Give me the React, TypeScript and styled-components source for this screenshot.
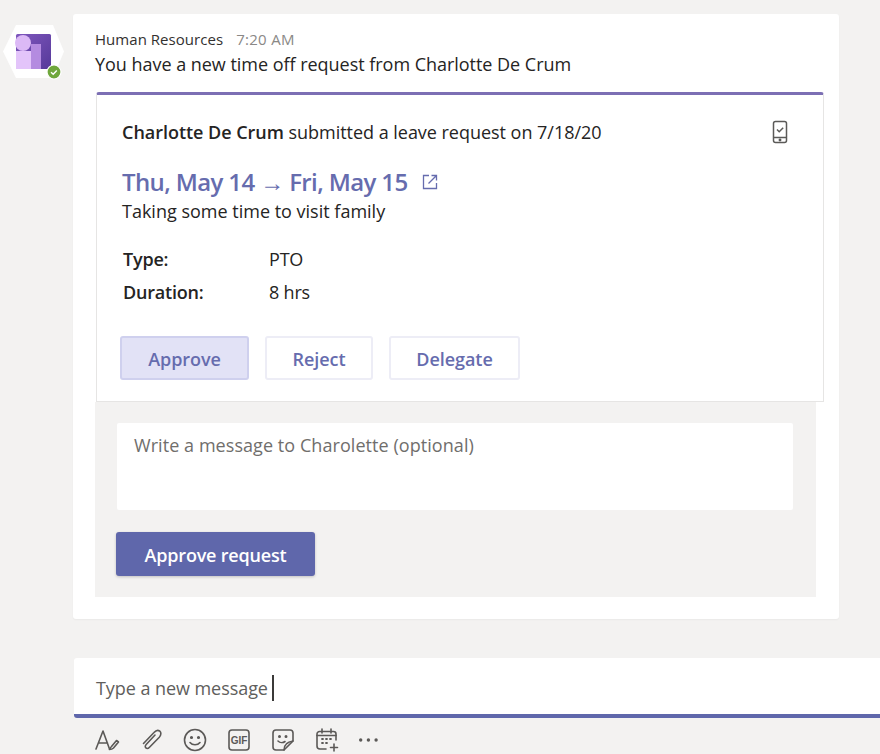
import React from "react";
import styled, { createGlobalStyle } from "styled-components";

const Global = createGlobalStyle`
  html, body { margin: 0; padding: 0; background: #f3f2f1; }
  body { font-family: "Open Sans", "Noto Sans", sans-serif; color: #252423; overflow: hidden; }
`;

const Page = styled.div`
  width: 880px;
  height: 754px;
  overflow: hidden;
  display: flex;
  flex-direction: column;
  padding-top: 14px;
  box-sizing: border-box;
`;

const Thread = styled.div`
  display: flex;
  align-items: flex-start;
`;

const AvatarColumn = styled.div`
  width: 73px;
  flex: none;
  padding: 11px 0 0 3px;
  box-sizing: border-box;
`;

const Message = styled.div`
  width: 766px;
  height: 605px;
  flex: none;
  background: #fff;
  border-radius: 3px;
  box-shadow: 0 1px 2px rgba(0, 0, 0, 0.04);
  padding: 14px 23px 0 22px;
  box-sizing: border-box;
`;

const Meta = styled.div`
  display: flex;
  align-items: baseline;
  gap: 13px;
  height: 23px;
  line-height: 23px;
`;

const Sender = styled.span`
  font-size: 15px;
  letter-spacing: 0.04px;
  color: #33312f;
`;

const Time = styled.span`
  font-size: 15px;
  letter-spacing: 0.3px;
  color: #8a8886;
`;

const Lead = styled.div`
  font-size: 18px;
  line-height: 26px;
  letter-spacing: -0.03px;
  color: #252423;
`;

const Card = styled.div`
  margin: 15px 0 0 1px;
  width: 728px;
  height: 310px;
  box-sizing: border-box;
  background: #fff;
  border: 1px solid #e6e5e4;
  border-top: 3px solid #7c6fb4;
  border-radius: 3px 3px 0 0;
  padding: 24px 25px 0 25px;
`;

const CardTop = styled.div`
  display: flex;
  justify-content: space-between;
  align-items: flex-start;
  padding-right: 10px;
`;

const Submitted = styled.div`
  font-size: 18px;
  line-height: 26px;
  letter-spacing: -0.03px;
  color: #252423;
  strong { font-weight: 600; }
`;

const Dates = styled.div`
  display: flex;
  align-items: center;
  gap: 14px;
  margin-top: 21px;
  font-size: 24px;
  line-height: 32px;
  font-weight: 600;
  letter-spacing: -0.62px;
  color: #666cae;
`;

const Note = styled.div`
  margin-top: 1px;
  font-size: 18px;
  line-height: 24px;
  color: #252423;
`;

const Facts = styled.dl`
  display: grid;
  grid-template-columns: 146px 1fr;
  grid-auto-rows: 32.5px;
  align-items: center;
  margin: 20px 0 0 1px;
  font-size: 18px;
  letter-spacing: -0.2px;
  dt { font-weight: 600; }
  dd { margin: 0; }
`;

const Actions = styled.div`
  display: flex;
  gap: 16px;
  margin-top: 28px;
  margin-left: -2px;
`;

const ActionButton = styled.button<{ $active?: boolean; $width: number }>`
  width: ${(p) => p.$width}px;
  height: 44px;
  padding: 2px 0 0;
  box-sizing: border-box;
  border-radius: 3px;
  border: 2px solid ${(p) => (p.$active ? "#cfd0ee" : "#ededf6")};
  background: ${(p) => (p.$active ? "#e2e2f6" : "#fff")};
  color: #666cae;
  font-family: inherit;
  font-size: 18px;
  font-weight: 600;
  letter-spacing: -0.05px;
`;

const Panel = styled.div`
  margin-left: 0;
  width: 721px;
  height: 195px;
  background: #f3f2f1;
  padding: 21px 0 0 21px;
  box-sizing: border-box;
`;

const Input = styled.div`
  width: 676px;
  height: 87px;
  margin-left: 1px;
  background: #fff;
  border-radius: 2px;
  padding: 9px 17px;
  box-sizing: border-box;
  font-size: 18px;
  line-height: 26px;
  letter-spacing: 0.06px;
  color: #706e6c;
`;

const Submit = styled.button`
  display: block;
  margin-top: 22px;
  width: 199px;
  height: 44px;
  padding: 2px 0 0;
  border: none;
  border-radius: 3px;
  background: #5f67ab;
  box-shadow: 0 1px 3px rgba(0, 0, 0, 0.2);
  color: #fff;
  font-family: inherit;
  font-size: 18px;
  font-weight: 600;
  letter-spacing: -0.2px;
`;

const Composer = styled.div`
  margin: 39px 0 0 74px;
  height: 60px;
  box-sizing: border-box;
  background: #fff;
  border-bottom: 4px solid #5f67ab;
  border-radius: 3px 0 0 3px;
  padding: 17px 0 0 22px;
  display: flex;
  align-items: flex-start;
  font-size: 18px;
  line-height: 26px;
  letter-spacing: -0.06px;
  color: #605e5c;
`;

const Caret = styled.span`
  display: inline-block;
  width: 2px;
  height: 26px;
  margin-left: 4px;
  background: #3b3a39;
`;

const Toolbar = styled.div`
  margin: 9px 0 0 94px;
  display: flex;
  align-items: center;
  gap: 18px;
`;

const Tool = styled.svg`
  width: 26px;
  height: 26px;
  flex: none;
  fill: none;
  stroke: #5b5957;
  stroke-width: 1.6;
  stroke-linecap: round;
  stroke-linejoin: round;
`;

const GifLabel = styled.text`
  font-family: "Liberation Sans Narrow", "Liberation Sans", sans-serif;
  font-size: 10px;
  font-weight: 700;
  fill: #5b5957;
  stroke: none;
`;

const Logo = () => (
  <svg width="61" height="53" viewBox="0 0 61 53" style={{ overflow: "visible" }}>
    <defs>
      <linearGradient id="lg" x1="0" y1="0" x2="1" y2="1">
        <stop offset="0" stopColor="#7f57bd" />
        <stop offset="1" stopColor="#56399a" />
      </linearGradient>
    </defs>
    <polygon points="0,26.500 13,0 50,0 61,26.500 50,53 13,53" fill="#fff" />
    <rect x="13" y="9" width="35" height="35" rx="1.500" fill="url(#lg)" />
    <rect x="28" y="19" width="10" height="25" fill="#b48be0" />
    <rect x="13" y="26" width="15" height="18" fill="#e3c4fa" />
    <circle cx="20" cy="18" r="8" fill="#dcb9f6" />
    <circle cx="51" cy="47" r="7" fill="#6fa73c" stroke="#fff" strokeWidth="1.200" />
    <path d="M48 47.200l2.200 2 3.600-3.800" fill="none" stroke="#fff" strokeWidth="1.400" />
  </svg>
);

const PhoneIcon = () => (
  <svg width="16" height="24" viewBox="0 0 16 24" fill="none" stroke="#5b5a58" strokeWidth="1.500" style={{ marginTop: 1 }}>
    <rect x="1.500" y="1.500" width="13" height="21" rx="2" />
    <path d="M1.500 17.500h13" />
    <path d="M5 9.500l2.200 2.200 4-4" />
    <circle cx="8" cy="20" r="0.700" fill="#5b5a58" />
  </svg>
);

const ExternalIcon = () => (
  <svg width="16" height="16" viewBox="0 0 16 16" fill="none" stroke="#666cae" strokeWidth="1.300">
    <path d="M7 1.500H1.500v13h13V9" />
    <path d="M6.500 9.500l8-8M9.500 1.500h5v5" />
  </svg>
);

export default function App() {
  return (
    <Page>
      <Global />
      <Thread>
        <AvatarColumn>
          <Logo />
        </AvatarColumn>
        <Message>
          <Meta>
            <Sender>Human Resources</Sender>
            <Time>7:20 AM</Time>
          </Meta>
          <Lead>You have a new time off request from Charlotte De Crum</Lead>
          <Card>
            <CardTop>
              <Submitted>
                <strong>Charlotte De Crum</strong> submitted a leave request on 7/18/20
              </Submitted>
              <PhoneIcon />
            </CardTop>
            <Dates>
              <span>Thu, May 14 → Fri, May 15</span>
              <ExternalIcon />
            </Dates>
            <Note>Taking some time to visit family</Note>
            <Facts>
              <dt>Type:</dt>
              <dd>PTO</dd>
              <dt>Duration:</dt>
              <dd>8 hrs</dd>
            </Facts>
            <Actions>
              <ActionButton $active $width={129}>Approve</ActionButton>
              <ActionButton $width={108}>Reject</ActionButton>
              <ActionButton $width={131}>Delegate</ActionButton>
            </Actions>
          </Card>
          <Panel>
            <Input>Write a message to Charolette (optional)</Input>
            <Submit>Approve request</Submit>
          </Panel>
        </Message>
      </Thread>
      <Composer>
        Type a new message
        <Caret />
      </Composer>
      <Toolbar>
        <Tool viewBox="0 0 26 26">
          <path d="M2 22L9 4l6.500 18M4.500 16h9" />
          <path d="M15.500 22.500c1.500 0 3-.5 4-1.500l5-6-2-1.500-5 6c-1 1-1.500 1.500-2 3z" />
        </Tool>
        <Tool viewBox="0 0 26 26">
          <path d="M17 8l-8.800 9.500c-1.200 1.300-1.200 2.600-.3 3.400 1 .9 2.400.6 3.600-.7l9.800-10c2-2.300 2-4.700.5-6-1.500-1.300-3.800-1-5.800 1.300L5.500 16.500" />
        </Tool>
        <Tool viewBox="0 0 26 26">
          <circle cx="13" cy="13" r="10.500" />
          <circle cx="9.500" cy="10.500" r="0.800" fill="#5b5957" />
          <circle cx="16.500" cy="10.500" r="0.800" fill="#5b5957" />
          <path d="M8 15.500c2.500 3 7.500 3 10 0" />
        </Tool>
        <Tool viewBox="0 0 26 26">
          <rect x="3" y="3" width="20" height="20" rx="3" />
          <GifLabel x="13" y="16.500" textAnchor="middle">GIF</GifLabel>
        </Tool>
        <Tool viewBox="0 0 26 26">
          <path d="M14 23H6a3 3 0 0 1-3-3V6a3 3 0 0 1 3-3h14a3 3 0 0 1 3 3v8z" />
          <path d="M14 23c0-5 2-8 9-9" />
          <circle cx="9.500" cy="9.500" r="0.700" fill="#5b5957" />
          <circle cx="16" cy="9.500" r="0.700" fill="#5b5957" />
          <path d="M8 14c2 2 5 2 7 .5" />
        </Tool>
        <Tool viewBox="0 0 26 26">
          <path d="M12 22H6a3 3 0 0 1-3-3V7a2.500 2.500 0 0 1 2.500-2.500h14A2.500 2.500 0 0 1 22 7v6" />
          <path d="M8 2v4M17 2v4M3 8.500h19" />
          <path d="M8 12h1M12 12h1M16 12h1M8 16h1M12 16h1" strokeWidth="1.800" />
          <path d="M20 17v7M16.500 20.500h7" />
        </Tool>
        <Tool viewBox="0 0 26 26">
          <circle cx="2.700" cy="13" r="1.700" fill="#5b5957" stroke="none" />
          <circle cx="10.400" cy="13" r="1.700" fill="#5b5957" stroke="none" />
          <circle cx="18.100" cy="13" r="1.700" fill="#5b5957" stroke="none" />
        </Tool>
      </Toolbar>
    </Page>
  );
}
